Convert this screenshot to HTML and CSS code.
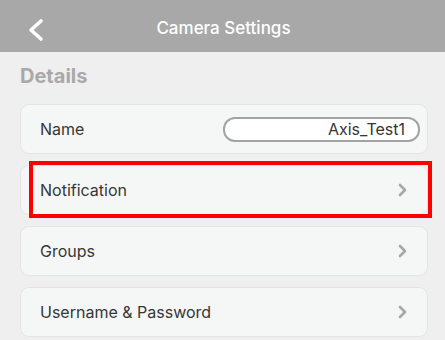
FILE: index.html
```html
<!DOCTYPE html>
<html lang="en">
<head>
  <meta charset="UTF-8">
  <meta name="viewport" content="width=device-width, initial-scale=1.0">
  <title>Camera Settings</title>
  <link rel="stylesheet" href="styles.css">
</head>
<body>

  <div class="navbar">
    <button class="back-btn" aria-label="Back">
      <svg width="16" height="24" viewBox="0 0 16 24">
        <polyline points="13,3 3,12 13,21" fill="none" stroke="#fff" stroke-width="3.6" stroke-linecap="round" stroke-linejoin="round"/>
      </svg>
    </button>
    <div class="nav-title">Camera Settings</div>
  </div>

  <div class="content">
    <h2 class="section-title">Details</h2>

    <div class="list">
      <div class="row">
        <span class="row-label">Name</span>
        <input type="text" class="name-input" value="Axis_Test1">
      </div>

      <div class="row highlighted">
        <span class="row-label">Notification</span>
        <span class="chevron">
          <svg width="10" height="14" viewBox="0 0 10 14"><polyline points="2,2 7,7 2,12" fill="none" stroke="#a7a7a7" stroke-width="2.6" stroke-linecap="round" stroke-linejoin="round"/></svg>
        </span>
        <!-- marker drawn over the row -->
        <div class="highlight-box"></div>
      </div>

      <div class="row">
        <span class="row-label">Groups</span>
        <span class="chevron">
          <svg width="10" height="14" viewBox="0 0 10 14"><polyline points="2,2 7,7 2,12" fill="none" stroke="#a7a7a7" stroke-width="2.6" stroke-linecap="round" stroke-linejoin="round"/></svg>
        </span>
      </div>

      <div class="row">
        <span class="row-label">Username &amp; Password</span>
        <span class="chevron">
          <svg width="10" height="14" viewBox="0 0 10 14"><polyline points="2,2 7,7 2,12" fill="none" stroke="#a7a7a7" stroke-width="2.6" stroke-linecap="round" stroke-linejoin="round"/></svg>
        </span>
      </div>
    </div>
  </div>

</body>
</html>
```

FILE: styles.css
```css
body {
  margin: 0;
  font-family: Inter, "Liberation Sans", Arial, sans-serif;
  background-color: #efefef;
  color: #363636;
  overflow: hidden;
}
.navbar {
  height: 52px;
  background-color: #a8a8a8;
  display: flex;
  align-items: center;
  justify-content: center;
  position: relative;
}
.back-btn {
  position: absolute;
  left: 28px;
  top: 18px;
  padding: 0;
  border: none;
  background: none;
  width: 16px;
  height: 24px;
}
.nav-title {
  color: #fff;
  font-size: 17px;
  font-weight: 500;
  margin-left: 2px;
  margin-top: 4px;
}
.content {
  padding: 0 17px 0 20px;
}
.section-title {
  margin: 12px 0 0 0;
  font-size: 20px;
  font-weight: 700;
  color: #a9a9a9;
  height: 40px;
  line-height: 24px;
}
.list {
  display: flex;
  flex-direction: column;
  gap: 11px;
}
.row {
  height: 48px;
  display: flex;
  align-items: center;
  justify-content: space-between;
  padding: 0 19px 0 19px;
  background-color: #f5f6f6;
  border: 1px solid #e4e4e4;
  border-radius: 9px;
  position: relative;
}
.row-label {
  font-size: 16px;
}
.name-input {
  width: 180px;
  height: 21px;
  padding: 0 13px 0 0;
  border: 2px solid #a3a3a3;
  border-radius: 12px;
  background: #fff;
  text-align: right;
  font-family: inherit;
  font-size: 16px;
  color: #363636;
  margin-right: -12px;
  box-sizing: content-box;
}
.chevron {
  display: flex;
  align-items: center;
}
.highlight-box {
  position: absolute;
  left: 8px;
  top: -5px;
  width: 395px;
  height: 49px;
  border: 4px solid #ff0000;
}
```
